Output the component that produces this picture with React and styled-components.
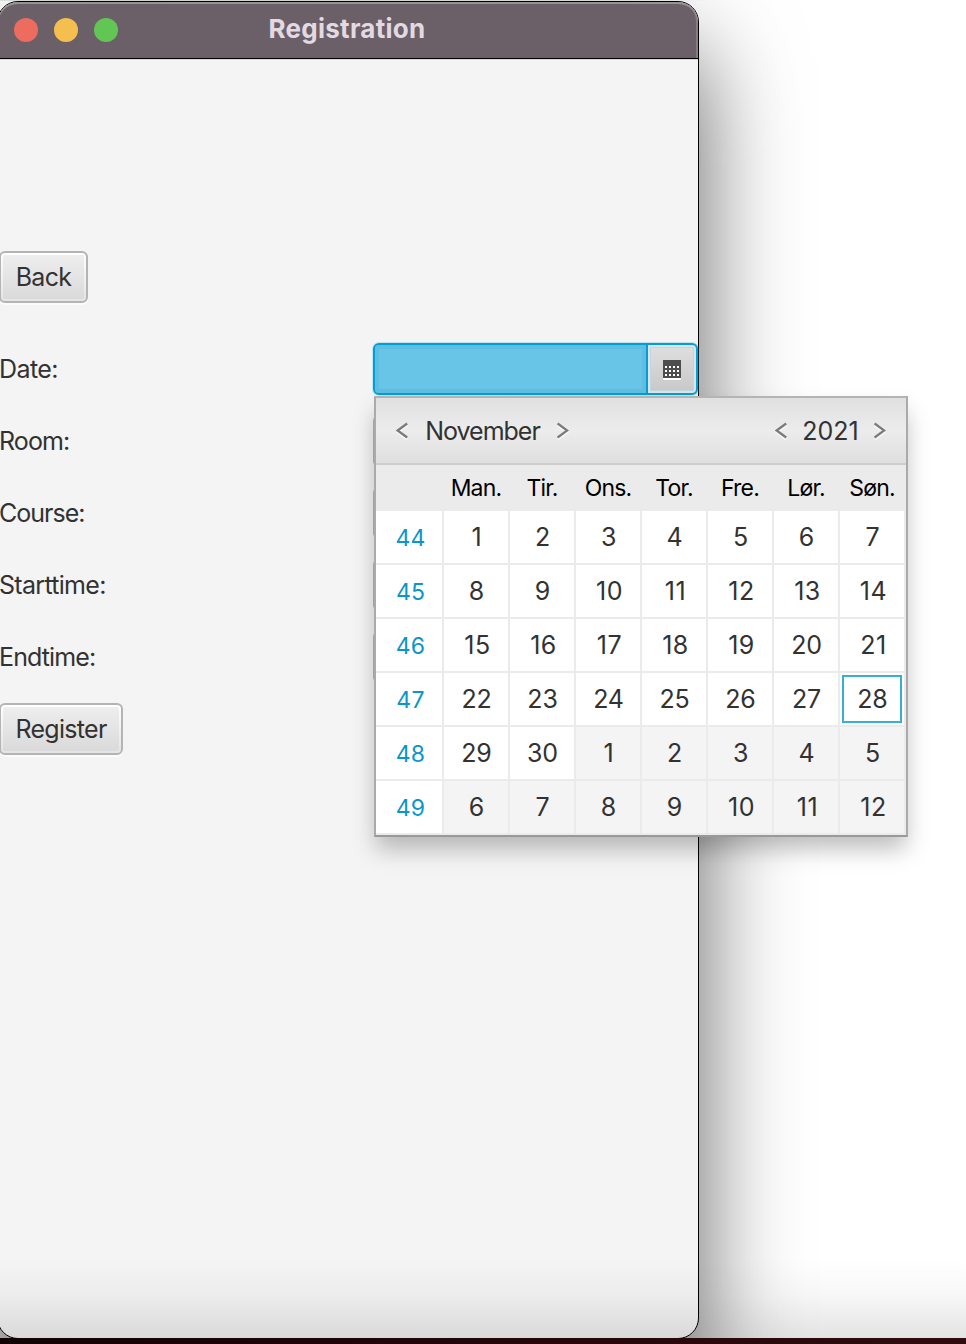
import React from "react";
import styled, { createGlobalStyle } from "styled-components";

const Global = createGlobalStyle`
  * { box-sizing: border-box; }
  body {
    margin: 0;
    background: #fff;
    font-family: Inter, "Liberation Sans", sans-serif;
    color: #323232;
  }
`;

const Desktop = styled.div`
  position: relative;
  width: 966px;
  height: 1344px;
  padding-top: 1px;
  overflow: hidden;
  background: linear-gradient(90deg, #e4e9e4, #eef1ee 620px, #fff 720px) 0 0 / 100% 1px no-repeat, #fff;
`;

const Window = styled.div`
  position: relative;
  width: 702px;
  height: 1338px;
  margin-left: -3px;
  border: 1px solid #000;
  border-radius: 21px;
  background: #f4f4f4;
  box-shadow: 0 50px 100px rgba(0, 0, 0, 0.62);
`;

const TitleBar = styled.header`
  position: relative;
  display: flex;
  align-items: center;
  justify-content: center;
  height: 57px;
  padding: 0 2px 3px 0;
  border-bottom: 1px solid #000;
  border-radius: 20px 20px 0 0;
  background: #6b6068;
  box-shadow: inset 0 2px 0 #989294, inset -2px 0 0 #857d82, 0 1px 0 #d9d9d9;
`;

const Lights = styled.div`
  position: absolute;
  left: 16px;
  top: 16px;
  display: flex;
  gap: 16px;
`;

const Light = styled.span`
  width: 24px;
  height: 24px;
  border-radius: 50%;
  background: ${(p) => p.$color};
`;

const Title = styled.h1`
  margin: 0;
  font-size: 26px;
  line-height: 30px;
  font-weight: 700;
  letter-spacing: 0.25px;
  color: #e3d9e0;
`;

const Content = styled.main`
  padding: 192px 0 0 2px;
`;

const Button = styled.button`
  display: flex;
  align-items: center;
  justify-content: center;
  width: ${(p) => p.$width}px;
  height: 52px;
  margin-left: -1px;
  padding: 2px;
  border: 2px solid #b4b4b4;
  border-radius: 6px;
  background: linear-gradient(#eeeeee, #dadada) content-box,
    linear-gradient(#ffffff, #e4e4e4) padding-box;
  box-shadow: 0 2px 0 #fbfbfb;
  font: 400 25px/30px Inter, "Liberation Sans", sans-serif;
  letter-spacing: -0.7px;
  color: #323232;
`;

const Form = styled.div`
  display: grid;
  grid-template-columns: 373px 325px;
  grid-auto-rows: 52px;
  row-gap: 20px;
  margin-top: 40px;
`;

const Label = styled.label`
  align-self: center;
  margin-left: -1px;
  font-size: 25px;
  line-height: 30px;
  letter-spacing: ${(p) => p.$spacing}px;
`;

const Field = styled.div`
  border: 2px solid #b4b4b4;
  border-radius: 6px;
  background: linear-gradient(#eeeeee, #dadada);
`;

const DatePicker = styled.div`
  display: flex;
  border: 2px solid #039ed3;
  border-radius: 6px;
  background: #039ed3;
  box-shadow: 0 0 0 1px rgba(3, 158, 211, 0.2);
  overflow: hidden;
`;

const DateInput = styled.div`
  flex: 1;
  margin-right: 2px;
  border: 4px solid #5fbfe2;
  background: #69c5e7;
`;

const DateButton = styled.div`
  display: flex;
  align-items: center;
  justify-content: center;
  width: 48px;
  padding: 2px 0 0;
  border: 2px solid #dce6ea;
  background: linear-gradient(#dedede, #c9c9c9);
  box-shadow: inset 0 0 0 1px #c3d6dd;
`;

const Popup = styled.section`
  position: absolute;
  left: 374px;
  top: 396px;
  width: 534px;
  height: 441px;
  border: 2px solid;
  border-color: #b4b4b4 #aaa #999 #aaa;
  background: #ebebeb;
  box-shadow: 0 14px 22px -2px rgba(0, 0, 0, 0.26);
`;

const MonthBar = styled.div`
  display: flex;
  align-items: center;
  justify-content: space-between;
  height: 67px;
  padding: 0 20px;
  border-bottom: 2px solid #cdcdcd;
  background: linear-gradient(#e0e0e0, #ececec 50%, #dfdfdf);
`;

const Spinner = styled.div`
  display: flex;
  align-items: center;
  justify-content: space-between;
  width: ${(p) => p.$width}px;
`;

const SpinnerText = styled.span`
  font-size: 25px;
  line-height: 30px;
  letter-spacing: ${(p) => p.$spacing}px;
`;

const Columns = styled.div`
  display: grid;
  grid-template-columns: 66px repeat(7, 64px);
  column-gap: 2px;
`;

const WeekdayRow = styled(Columns)`
  height: 46px;
  align-items: center;
`;

const Weekday = styled.span`
  justify-self: center;
  font-size: 23px;
  line-height: 28px;
  letter-spacing: -0.8px;
  white-space: nowrap;
  color: #000;
`;

const Days = styled(Columns)`
  grid-auto-rows: 52px;
  row-gap: 2px;
`;

const WeekNumber = styled.span`
  display: flex;
  align-items: center;
  justify-content: center;
  padding: 2px 0 0 3px;
  background: #fff;
  font-size: 23px;
  letter-spacing: 0.2px;
  color: #0a96c9;
`;

const Day = styled.span`
  display: flex;
  align-items: center;
  justify-content: center;
  padding-left: ${(p) => (p.$narrow ? 3 : 1)}px;
  background: ${(p) => (p.$outside ? "#f4f4f4" : "#fff")};
  font-size: 25px;
  letter-spacing: ${(p) => (p.$narrow ? 0.5 : -0.2)}px;
  ${(p) => p.$today && "border: 2px solid #fff; outline: 2px solid #36aed5; outline-offset: -4px;"}
`;

const Dock = styled.footer`
  position: absolute;
  left: 0;
  right: 0;
  bottom: 0;
  height: 84px;
  border-bottom: 6px solid #000;
  background: linear-gradient(rgba(0, 0, 0, 0), rgba(0, 0, 0, 0.03) 45%, rgba(0, 0, 0, 0.11)) padding-box;
  border-image: linear-gradient(90deg, #120206, #26060b 560px, #310a10) 0 0 1 0;
`;

const Arrow = ({ right }) => {
  const d = right ? "M0.6 1.5 L10.2 8.5 L0.6 15.5" : "M11.2 1.5 L1.6 8.5 L11.2 15.5";
  return (
    <svg width="12" height="18" viewBox="0 0 12 18" fill="none" strokeWidth="2.3">
      <path d={d} stroke="#f8f8f8" transform="translate(0 1.8)" />
      <path d={d} stroke="#7b7b7b" />
    </svg>
  );
};

const CalendarIcon = () => (
  <svg width="18" height="20" viewBox="0 0 18 20" shapeRendering="crispEdges">
    <rect y="2" width="18" height="18" fill="#fff" />
    <rect width="18" height="18" fill="#4d4d4d" />
    {[6, 10, 14].map((y) =>
      [2, 6, 10, 14].map((x) => <rect key={`${x}-${y}`} x={x} y={y} width="2" height="2" fill="#fff" />)
    )}
  </svg>
);

const labels = [
  ["Room:", -0.9],
  ["Course:", -1],
  ["Starttime:", -0.7],
  ["Endtime:", -0.9],
];
const weekdays = ["Man.", "Tir.", "Ons.", "Tor.", "Fre.", "Lør.", "Søn."];
const weeks = [44, 45, 46, 47, 48, 49];

export default function App() {
  return (
    <Desktop>
      <Global />
      <Window>
        <TitleBar>
          <Lights>
            <Light $color="#ed6b5f" />
            <Light $color="#f5bf4f" />
            <Light $color="#62c655" />
          </Lights>
          <Title>Registration</Title>
        </TitleBar>
        <Content>
          <Button $width={89}>Back</Button>
          <Form>
            <Label $spacing={-0.6}>Date:</Label>
            <DatePicker>
              <DateInput />
              <DateButton>
                <CalendarIcon />
              </DateButton>
            </DatePicker>
            {labels.map(([text, spacing]) => (
              <React.Fragment key={text}>
                <Label $spacing={spacing}>{text}</Label>
                <Field />
              </React.Fragment>
            ))}
            <Button $width={124}>Register</Button>
          </Form>
        </Content>
      </Window>
      <Popup>
        <MonthBar>
          <Spinner $width={173}>
            <Arrow />
            <SpinnerText $spacing={-1}>November</SpinnerText>
            <Arrow right />
          </Spinner>
          <Spinner $width={111}>
            <Arrow />
            <SpinnerText $spacing={0}>2021</SpinnerText>
            <Arrow right />
          </Spinner>
        </MonthBar>
        <WeekdayRow>
          <span />
          {weekdays.map((name) => (
            <Weekday key={name}>{name}</Weekday>
          ))}
        </WeekdayRow>
        <Days>
          {weeks.map((week, row) => (
            <React.Fragment key={week}>
              <WeekNumber>{week}</WeekNumber>
              {weekdays.map((name, col) => {
                const n = row * 7 + col + 1;
                const day = n > 30 ? n - 30 : n;
                return (
                  <Day
                    key={name}
                    $outside={n > 30}
                    $today={n === 28}
                    $narrow={day > 9 && String(day).includes("1")}
                  >
                    {day}
                  </Day>
                );
              })}
            </React.Fragment>
          ))}
        </Days>
      </Popup>
      <Dock />
    </Desktop>
  );
}
